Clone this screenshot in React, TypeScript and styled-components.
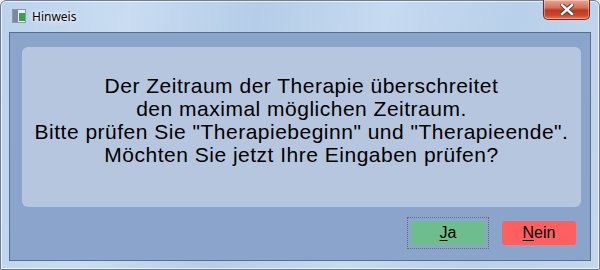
import React from "react";
import styled, { createGlobalStyle } from "styled-components";

const Global = createGlobalStyle`
  html, body { margin: 0; padding: 0; background: #ffffff; }
  #root { width: 600px; height: 270px; }
`;

const Window = styled.div`
  box-sizing: border-box;
  width: 600px;
  height: 270px;
  display: flex;
  flex-direction: column;
  border: 1px solid #6f7f93;
  border-radius: 6px 6px 0 0;
  background: linear-gradient(100deg, #bcd3ec 0%, #c9dcf1 20%, #b5cde8 40%, #c6daf0 60%, #b9d0ea 80%, #c3d7ee 100%);
  box-shadow: inset 0 0 0 1px rgba(255,255,255,0.7);
  padding: 0 8px 8px 8px;
`;

const TitleBar = styled.div`
  height: 31px;
  display: flex;
  align-items: flex-start;
  gap: 6px;
  padding-left: 3px;
`;

const AppIcon = styled.div`
  margin-top: 8px;
  width: 14px;
  height: 14px;
  display: flex;
`;

const Title = styled.span`
  margin-top: 7px;
  font-family: "Noto Sans", "Open Sans", sans-serif;
  font-size: 12px;
  color: #000000;
  text-shadow: 0 0 6px #ffffff, 0 0 3px #ffffff;
`;

const CloseButton = styled.div`
  margin-left: auto;
  margin-right: 1px;
  margin-top: -1px;
  width: 47px;
  height: 20px;
  box-sizing: border-box;
  border: 1px solid #6b2b22;
  border-top: none;
  border-radius: 0 0 5px 5px;
  background: linear-gradient(180deg, #e8a593 0%, #d6705c 40%, #c0391f 55%, #c9482c 80%, #e07a5a 100%);
  display: flex;
  align-items: center;
  justify-content: center;
  box-shadow: inset 0 0 0 1px rgba(255,255,255,0.35);
`;

const Client = styled.div`
  flex: 1;
  box-sizing: border-box;
  border: 1px solid #5a6f8c;
  background: #8aa4cc;
  display: flex;
  flex-direction: column;
  padding: 14px 9px 0 12px;
`;

const MessagePanel = styled.div`
  height: 160px;
  border-radius: 6px;
  background: #b7c6df;
  display: flex;
  align-items: center;
  justify-content: center;
`;

const Message = styled.p`
  margin: 0;
  font-family: "Liberation Sans", Arial, sans-serif;
  font-size: 21px;
  letter-spacing: 0.5px;
  line-height: 23px;
  text-align: center;
  color: #000000;
  padding-bottom: 14px;
`;

const ButtonRow = styled.div`
  display: flex;
  justify-content: flex-end;
  align-items: center;
  gap: 9px;
  margin-top: 10px;
  padding-right: 1px;
`;

const Focus = styled.div<{ $focused?: boolean }>`
  padding: 3px;
  border: 1px dotted ${(p) => (p.$focused ? "#6a6a6a" : "transparent")};
`;

const Button = styled.div<{ $color: string }>`
  width: 74px;
  height: 24px;
  border-radius: 3px;
  background: ${(p) => p.$color};
  display: flex;
  align-items: center;
  justify-content: center;
  font-family: "Liberation Sans", Arial, sans-serif;
  font-size: 16px;
  color: #000000;
`;

const Key = styled.span`
  text-decoration: underline;
  text-underline-offset: 2px;
`;

export default function App() {
  return (
    <>
      <Global />
      <Window>
        <TitleBar>
          <AppIcon>
            <svg width="14" height="14" viewBox="0 0 14 14">
              <rect x="0.5" y="0.5" width="13" height="13" fill="#e8eef4" stroke="#8a9aaa" />
              <rect x="1" y="1" width="5" height="12" fill="#7a8a9c" />
              <rect x="7" y="4" width="6" height="8" fill="#3aa04a" />
            </svg>
          </AppIcon>
          <Title>Hinweis</Title>
          <CloseButton>
            <svg width="14" height="11" viewBox="0 0 14 11">
              <path d="M2 1 L12 10 M12 1 L2 10" stroke="#3a3a3a" strokeWidth="4.2" strokeLinecap="square" />
              <path d="M2 1 L12 10 M12 1 L2 10" stroke="#ffffff" strokeWidth="2.4" strokeLinecap="square" />
            </svg>
          </CloseButton>
        </TitleBar>
        <Client>
          <MessagePanel>
            <Message>
              Der Zeitraum der Therapie überschreitet
              <br />
              den maximal möglichen Zeitraum.
              <br />
              Bitte prüfen Sie "Therapiebeginn" und "Therapieende".
              <br />
              Möchten Sie jetzt Ihre Eingaben prüfen?
            </Message>
          </MessagePanel>
          <ButtonRow>
            <Focus $focused>
              <Button $color="#6dbe8c">
                <Key>J</Key>a
              </Button>
            </Focus>
            <Focus>
              <Button $color="#ff5f5f">
                <Key>N</Key>ein
              </Button>
            </Focus>
          </ButtonRow>
        </Client>
      </Window>
    </>
  );
}
